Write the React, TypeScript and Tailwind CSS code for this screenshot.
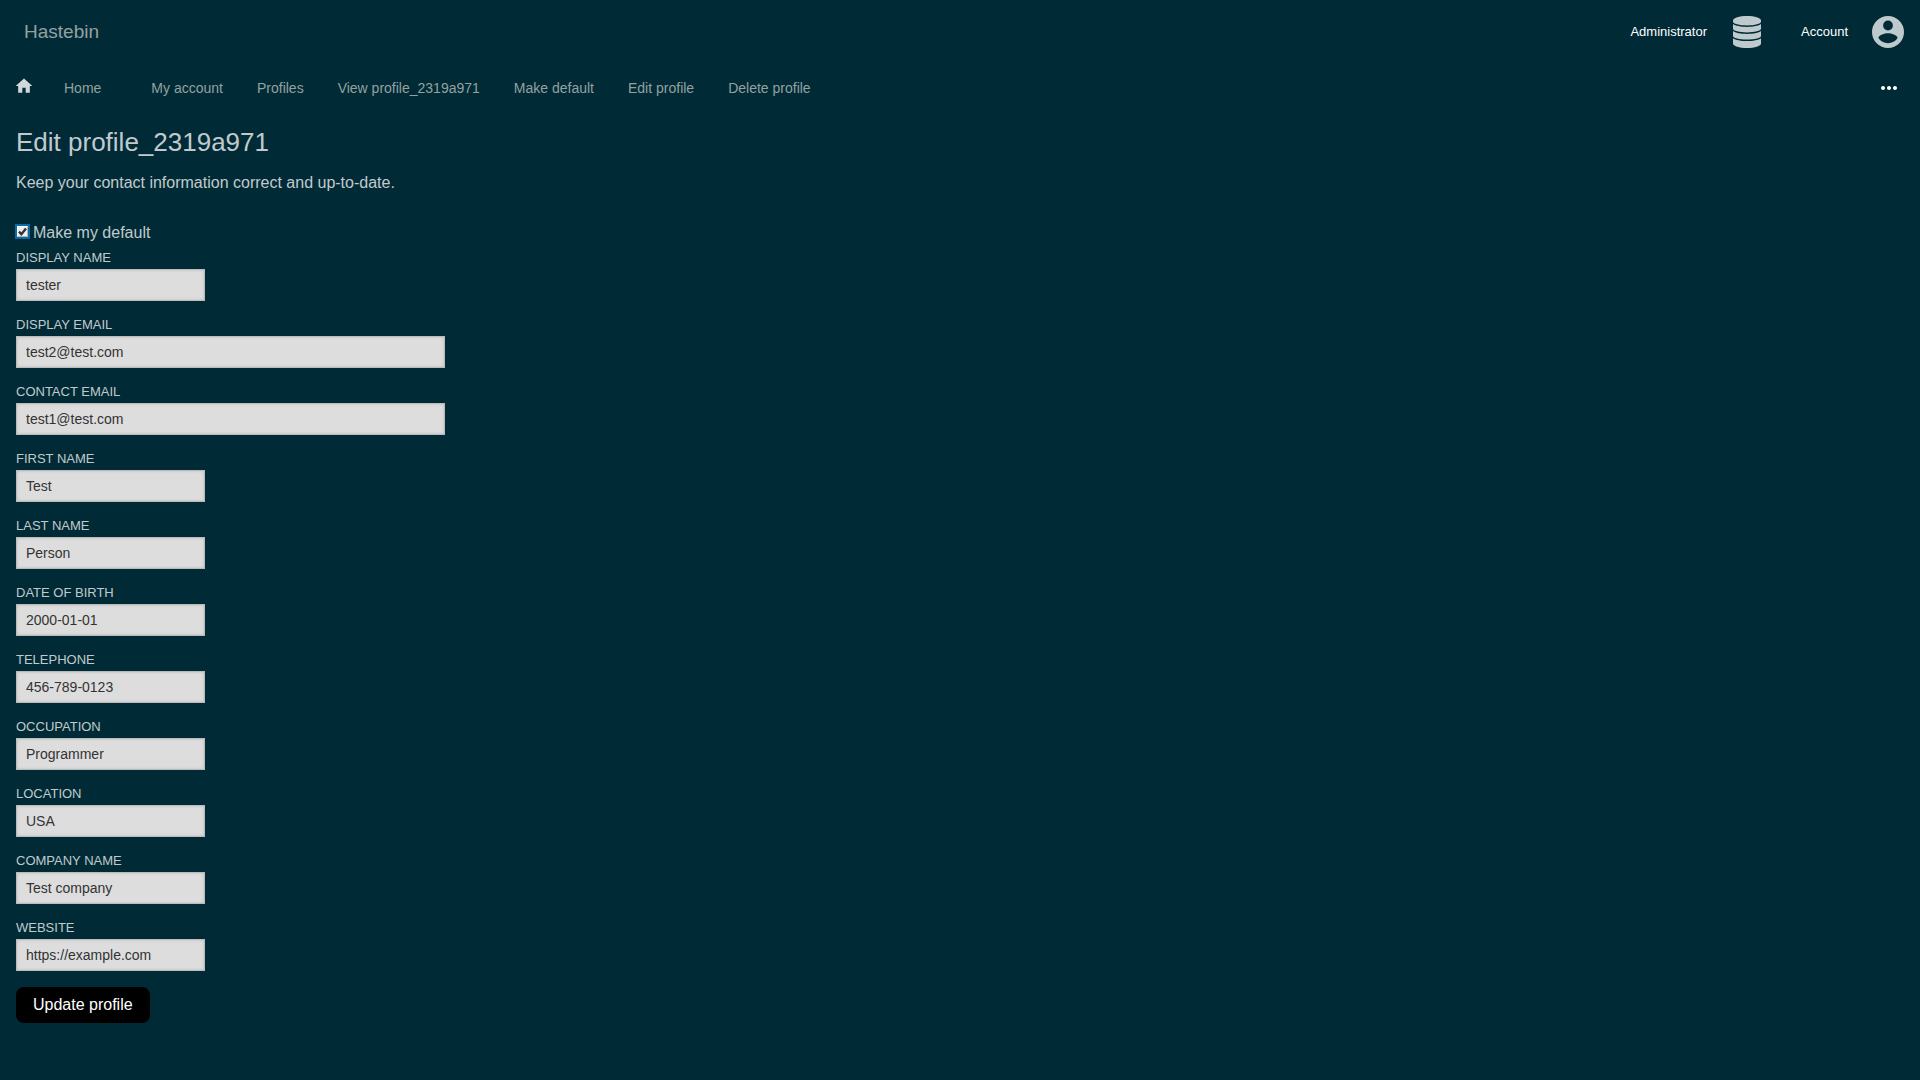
import { MdHome, MdMoreHoriz } from "react-icons/md";

const links = [
  "My account",
  "Profiles",
  "View profile_2319a971",
  "Make default",
  "Edit profile",
  "Delete profile",
];

type Field = { id: string; label: string; value: string; type?: string; wide?: boolean };

const fields: Field[] = [
  { id: "display-name", label: "Display name", value: "tester" },
  { id: "display-email", label: "Display email", value: "test2@test.com", wide: true },
  { id: "contact-email", label: "Contact email", value: "test1@test.com", wide: true },
  { id: "first-name", label: "First name", value: "Test" },
  { id: "last-name", label: "Last name", value: "Person" },
  { id: "dob", label: "Date of birth", value: "2000-01-01" },
  { id: "phone", label: "Telephone", value: "456-789-0123", type: "tel" },
  { id: "occupation", label: "Occupation", value: "Programmer" },
  { id: "location", label: "Location", value: "USA" },
  { id: "company", label: "Company name", value: "Test company" },
  { id: "website", label: "Website", value: "https://example.com", type: "url" },
];

function DatabaseIcon() {
  return (
    <svg viewBox="0 0 28 32" className="h-8 w-7 fill-[#bfcacd]" aria-hidden="true">
      <path d="M0 4.5C0 2 6.3 0 14 0s14 2 14 4.5V5.700c0 2-6.300 3.700-14 3.700S0 7.700 0 5.700z" />
      <path d="M0 8c2.500 1.800 8 2.900 14 2.900s11.500-1.100 14-2.900v4.800c0 2-6.300 3.600-14 3.600S0 14.800 0 12.800z" />
      <path d="M0 15.100c2.500 1.800 8 2.900 14 2.900s11.500-1.100 14-2.900v4.800c0 2-6.300 3.600-14 3.600S0 21.900 0 19.900z" />
      <path d="M0 22.200c2.500 1.800 8 2.900 14 2.900s11.500-1.100 14-2.900v5.300c0 2.500-6.300 4.500-14 4.500S0 30 0 27.500z" />
    </svg>
  );
}

function AccountIcon() {
  return (
    <svg viewBox="0 0 32 32" className="h-8 w-8 fill-[#bfcacd]" aria-hidden="true">
      <path
        fillRule="evenodd"
        d="M16 0a16 16 0 1 0 0 32 16 16 0 0 0 0-32zM16 4.600a4.900 4.900 0 1 1 0 9.800 4.900 4.900 0 0 1 0-9.800zM16 27.300c-4 0-7.500-2-9.600-5.200.1-3.200 6.400-4.900 9.600-4.900s9.500 1.700 9.600 4.900C23.500 25.300 20 27.300 16 27.300z"
      />
    </svg>
  );
}

function Header() {
  return (
    <header className="flex h-16 items-center justify-between pl-6 pr-4">
      <a href="#" className="text-[19px] text-[#93a1a1]">
        Hastebin
      </a>
      <div className="flex items-center gap-10 text-[13px] text-white">
        <button type="button" className="flex items-center gap-[26px]">
          Administrator
          <DatabaseIcon />
        </button>
        <button type="button" className="flex items-center gap-6">
          Account
          <AccountIcon />
        </button>
      </div>
    </header>
  );
}

function NavBar() {
  return (
    <nav className="flex h-12 items-center px-4 text-[14px] text-[#93a1a1]">
      <a href="#" className="flex items-center gap-8">
        <MdHome className="-mx-0.5 mb-1 h-5 w-5 text-[#d0d8da]" />
        Home
      </a>
      <div className="ml-[50px] flex flex-1 items-center gap-[34px]">
        {links.map((text) => (
          <a key={text} href="#">
            {text}
          </a>
        ))}
      </div>
      <button type="button" aria-label="More" className="mr-[3px] text-white">
        <MdMoreHoriz className="h-6 w-6" />
      </button>
    </nav>
  );
}

function TextField({ id, label, value, type = "text", wide }: Field) {
  return (
    <div className="mb-4 flex flex-col items-start">
      <label htmlFor={id} className="mb-[3px] text-[13px] leading-4 uppercase">
        {label}
      </label>
      <input
        id={id}
        type={type}
        defaultValue={value}
        className={
          (wide ? "w-[429px]" : "w-[189px]") +
          " h-8 max-w-full border border-[#bbb] bg-[#ddd] px-[9px] text-[14px] text-[#333] shadow-[inset_0_0_3px_#bbb] outline-none"
        }
      />
    </div>
  );
}

export default function App() {
  return (
    <div className="min-h-screen bg-[#002b36] font-['Liberation_Sans',Arial,sans-serif] text-[#c0cacd]">
      <Header />
      <NavBar />
      <main className="px-4 pt-3">
        <h1 className="text-[26px] leading-9">Edit profile_2319a971</h1>
        <p className="mt-[11px] text-base">Keep your contact information correct and up-to-date.</p>
        <form className="mt-[26px]" onSubmit={(e) => e.preventDefault()}>
          <div className="mb-[5px] flex items-center">
            <span className="mb-[3px] ml-px grid">
              <input
                id="make-default"
                type="checkbox"
                defaultChecked
                className="peer col-start-1 row-start-1 h-[11px] w-[11px] appearance-none border border-[#b5b5b5] border-t-white border-l-white bg-[#eee] outline-2 outline-[#0b6aa2]"
              />
              <svg
                viewBox="0 0 11 11"
                className="pointer-events-none invisible col-start-1 row-start-1 h-[11px] w-[11px] peer-checked:visible"
                aria-hidden="true"
              >
                <path d="M2 5.600 4.400 8.200 9 2.600" fill="none" stroke="#333" strokeWidth="2.400" />
              </svg>
            </span>
            <label htmlFor="make-default" className="pl-[5px] text-base">
              Make my default
            </label>
          </div>
          {fields.map((field) => (
            <TextField key={field.id} {...field} />
          ))}
          <button type="submit" className="h-9 rounded-lg bg-black px-[17px] text-base text-white">
            Update profile
          </button>
        </form>
      </main>
    </div>
  );
}
